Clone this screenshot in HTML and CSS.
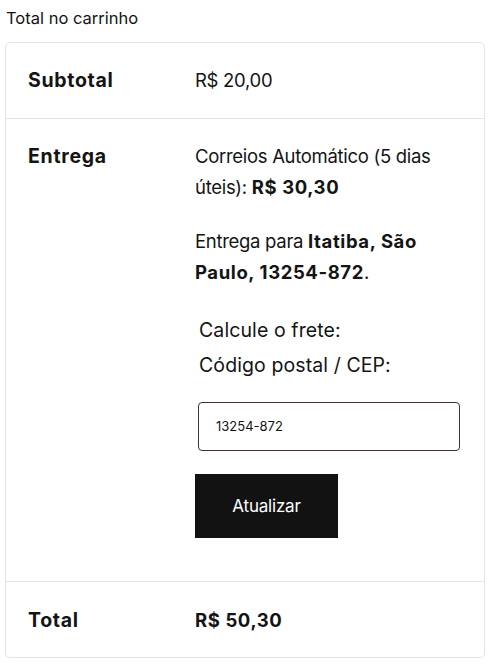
FILE: index.html
```html
<!DOCTYPE html>
<html lang="pt-BR">
<head>
<meta charset="utf-8">
<link rel="stylesheet" href="styles.css">
</head>
<body>
<h2 class="title">Total no carrinho</h2>
<div class="card">
  <div class="row">
    <div class="label">Subtotal</div>
    <div class="value">R$ 20,00</div>
  </div>
  <div class="row">
    <div class="label">Entrega</div>
    <div class="value">
      <p class="para">Correios Automático (5 dias úteis): <strong>R$ 30,30</strong></p>
      <p class="para">Entrega para <strong>Itatiba, São Paulo, 13254-872</strong>.</p>
      <div class="calc">
        <div class="calc-line first">Calcule o frete:</div>
        <div class="calc-line">Código postal / CEP:</div>
      </div>
      <div class="input">13254-872</div>
      <button class="btn">Atualizar</button>
    </div>
  </div>
  <div class="row last">
    <div class="label">Total</div>
    <div class="value"><strong>R$ 50,30</strong></div>
  </div>
</div>
</body>
</html>
```
FILE: styles.css
```css
* { box-sizing: border-box; }
html, body { margin: 0; padding: 0; background: #fff; }
body {
  font-family: Inter, "Noto Sans", sans-serif;
  color: #141414;
  padding: 5px 7px 0 5px;
}
.title {
  font-size: 16.5px;
  font-weight: 400;
  margin: 0 0 0 1px;
  line-height: 26px;
  letter-spacing: 0;
}
.card {
  margin-top: 11px;
  width: 480px;
  border: 1px solid #e4e4e4;
  border-radius: 5px;
}
.row {
  display: grid;
  grid-template-columns: 167px 1fr;
  padding: 22px 22px;
  border-bottom: 1px solid #e4e4e4;
  font-size: 18.5px;
  line-height: 31px;
  letter-spacing: -0.3px;
}
.row.last { border-bottom: none; padding: 23px 22px 21px; }
.label { font-weight: 700; font-size: 19.5px; letter-spacing: 0.7px; }
.value { font-weight: 400; }
.value strong { font-weight: 700; letter-spacing: 0.6px; }
.para { margin: 0 0 23px 0; }
.calc { padding-left: 4px; margin-top: 27px; font-size: 19.5px; letter-spacing: 0.1px; }
.calc-line { line-height: 36px; }
.calc-line.first { line-height: 31px; margin-bottom: 1px; }
.input {
  margin: 19px 0 0 3px;
  width: 262px;
  height: 49px;
  border: 1px solid #3d3333;
  border-radius: 4px;
  font-size: 13px;
  line-height: 47px;
  padding-left: 17px;
  letter-spacing: 0;
}
.btn {
  display: block;
  margin: 23px 0 21px 0;
  width: 143px;
  height: 64px;
  background: #121212;
  color: #fff;
  border: none;
  border-radius: 0;
  font-family: inherit;
  font-size: 17px;
  letter-spacing: -0.2px;
}
```
